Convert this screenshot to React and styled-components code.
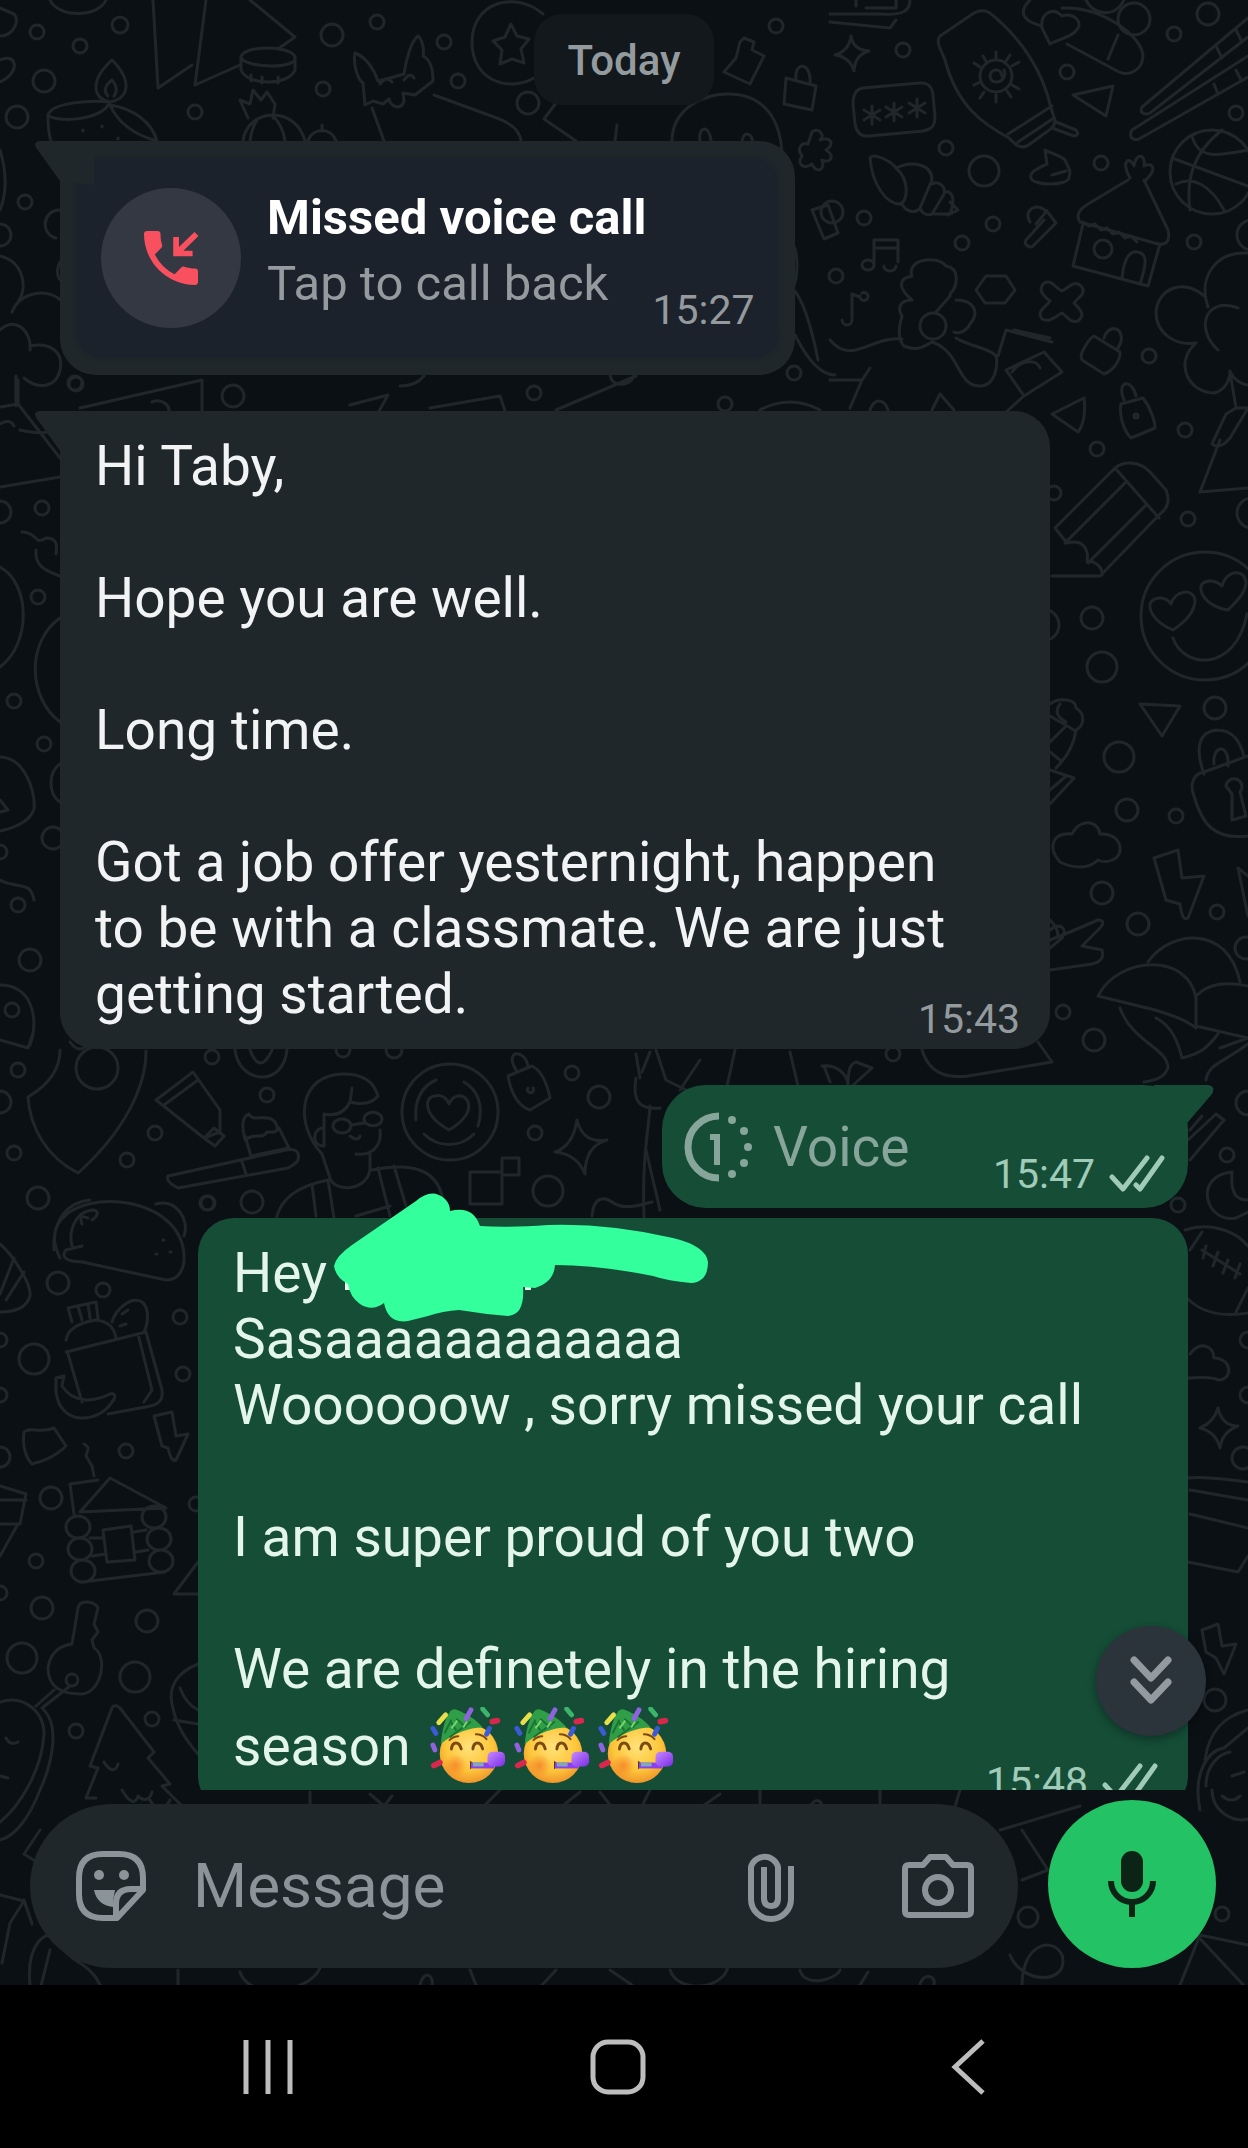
import { styled, createGlobalStyle } from "styled-components";

const missedCall = { title: "Missed voice call", hint: "Tap to call back", time: "15:27" };

const greeting = `Hi Taby,

Hope you are well.

Long time.

Got a job offer yesternight, happen
to be with a classmate. We are just
getting started.`;

const reply = `Sasaaaaaaaaaaaa
Woooooow , sorry missed your call

I am super proud of you two

We are definetely in the hiring`;

// wallpaper bubbles: x, y, radius
const dots = [
    [37, 32, 7], [120, 25, 8], [80, 46, 7], [44, 81, 11], [17, 117, 11], [195, 112, 7], [332, 35, 11],
    [377, 22, 7], [444, 42, 7], [458, 81, 7], [323, 89, 7], [528, 103, 11], [776, 26, 7], [25, 202, 7],
    [0, 235, 11], [75, 383, 7], [233, 396, 11], [534, 393, 7], [794, 373, 7], [725, 404, 7],
    [1134, 19, 16], [1208, 14, 11], [1174, 34, 7], [1067, 72, 7], [1236, 113, 7], [903, 50, 7],
    [946, 148, 7], [984, 171, 15], [1101, 163, 7], [864, 218, 7], [993, 224, 7], [962, 243, 7],
    [836, 276, 7], [1194, 242, 7], [1252, 235, 15], [1149, 356, 7], [1185, 430, 7], [1097, 449, 7],
    [1188, 519, 7], [1252, 513, 15], [1054, 493, 7], [1092, 618, 11], [1102, 667, 15], [1215, 708, 11],
    [1119, 757, 15], [1127, 810, 11], [1176, 816, 7], [1102, 893, 11], [1138, 924, 11], [1217, 912, 7],
    [1063, 1012, 7], [1094, 1040, 11], [893, 1054, 7], [1246, 948, 11], [1043, 625, 16], [832, 212, 11],
    [18, 1070, 7], [212, 1057, 7], [267, 1095, 7], [155, 1133, 7], [14, 1153, 7], [127, 1160, 7],
    [38, 1198, 11], [208, 1203, 7], [252, 1202, 11], [97, 1068, 21], [572, 1073, 7], [599, 1097, 11],
    [535, 1133, 7], [548, 1191, 15], [343, 1050, 7], [394, 1050, 8], [0, 1102, 11],
    [58, 1283, 11], [103, 1290, 7], [180, 1317, 7], [34, 1359, 15], [183, 1374, 7], [0, 1340, 7],
    [0, 1395, 7], [126, 1451, 7], [51, 1498, 11], [196, 1504, 7], [36, 1561, 7], [0, 1593, 7],
    [42, 1608, 11], [147, 1621, 11], [22, 1658, 15], [135, 1677, 15], [152, 1719, 7], [76, 1731, 7],
    [0, 1457, 10], [207, 1203, 7], [76, 384, 7], [42, 508, 7], [38, 597, 7], [14, 701, 7], [44, 744, 7],
    [53, 838, 11], [0, 852, 7], [0, 512, 11], [1227, 1155, 7], [1178, 1205, 7], [1248, 1103, 12],
    [1248, 1340, 8], [1248, 1395, 8], [1243, 1458, 11], [1215, 1700, 11], [1028, 1917, 10],
    [1222, 1914, 7], [18, 905, 7], [30, 960, 11], [12, 1010, 7],
];

const doodles = [
    // top left: cup, sheet of paper, drum, candle
    "M50 0C58 18 98 18 106 0M153 0l5 88 34-23M206 0l-11 85 45-20M250 0l45 37-17 12M0 36c14 0 20-16 14-22L0 8M0 60c16-8 22 12 0 22",
    "M241 57c2-12 50-12 54 0s-50 12-54 0v13c6 16 48 16 54 0V57M251 75v6M262 77v6M278 77v6",
    "M112 60C90 80 92 98 110 102C130 98 132 80 112 60M108 96c-8-8 4-16 4-16s8 8 2 16M110 102c-18-2-58 0-62 13 8 8 54 6 62-13zM48 115c0 10 0 18 3 26M110 105c8 18 25 30 47 36M110 105c25 4 42 18 47 36M83 130v1M102 126v1M118 138v1",
    // pineapple and its leaf
    "M248 118l-8-18 10 4 3-14 8 10 6-8 8 12-2 14M243 141c2-16 15-26 30-26s28 10 32 26M257 120q-6 10-7 21M273 116q10 10 12 25M308 141c4-14 24-14 28 0M322 131v-6",
    // fox
    "M355 53c-2 10 2 26 8 30l2 22 8-4 10 3 6-5c2 8 12 12 15 2l-1-8 12 2 18-14c0-14-4-22-10-25 2-8-2-18-5-20-7 5-12 24-14 38l-14 4-12 3c-4-12-12-24-23-28zM434 95l60 22c18 6 26 14 27 24M372 108l12 33M380 84c4-6 8-6 12-2M404 80c4-6 8-6 10-2",
    // coin with a star
    "M543 14C515-10 472 2 472 42s38 50 62 36M511 24l6 12 12 3-8 10 3 14-12-4-12 5 2-14-9-9 12-4z",
    "M744 38l10 4-2 8 12 6-14 28-26-12 12-14 4-16zM786 78l30 8-4 24-28-6zM796 80c-2-20 16-18 14 4M672 141c0-30 28-47 56-47s52 16 54 60M700 141c-2-16 10-16 11 0M742 143c0-12 10-12 11 0M556 103l-12 16 32 22M617 125l-2 16",
    "M812 132c6-6 14 4 8 8 10-4 16 4 6 10 10 6 4 14-4 10 4 10-6 14-10 4-8 6-16 0-10-8-6-8 0-14 6-12z",
    // left edge: tree and clouds
    "M0 150c6 20 8 40 0 60M60 210c-18 0-20 24-4 28M0 256c24 6 28 32 18 46M12 312c8-22 40-24 50-10M0 330c14-14 32 0 30 20M30 346c20-4 34 6 30 24s-22 20-36 8M16 376v30M60 262q-6 12 2 20",
    "M80 408l122-28v32M152 402c10-4 20 4 16 12M350 405l38-10-10 18M430 408l70-12 6 18M400 386q16 0 24-10M556 410l80-34M760 410q30-16 60 0M610 372q0 14 14 12 10-2 10-12",
    "M790 240c10 10 8 40 2 50M812 210l16-5 10 28-14 6zM794 290c12 14 20 50 24 70M795 335c10 20 24 40 40 40",
    // keyboard, spark, passcode
    "M830 14h50c24 2 30-4 30-14M830 22l60 6 6-8M856 0v6M866 8h30V0",
    "M851 36q2 14 18 15-14 4-15 20-4-14-19-16 14-4 16-19",
    "M863 88l56-5c10-1 13 4 14 12l2 22c0 10-5 13-12 14l-54 5c-10 1-13-6-14-12l-2-20c0-10 4-15 10-16z",
    "M872 106v18M864 110l16 10M880 110l-16 10M894 103v18M886 107l16 10M902 107l-16 10M917 99v18M909 103l16 10M925 103l-16 10",
    // sunscreen
    "M940 36l34-23c6-3 11-3 16 0 32 26 52 56 61 95l4 12c0 9-10 12-14 16l-14 10c-8 3-12-2-18-8-26-14-52-32-64-78l-6-14q-2-7 1-10zM1008 134l44-28M1018 142l36-24M1056 122l20 8q4 5-2 6l-22-8",
    "M980 76a16 16 0 1 0 32 0 16 16 0 1 0-32 0M1002 76a6 6 0 1 0-6 6c8 0 10-8 8-12M996 52v6M996 95v7M974 63l6 4M1012 85l7 4M974 85l6-3M1012 66l7-4M983 56l3 5M1007 91l4 6M1010 55l-4 6M984 92l-4 6",
    "M1030 0c-14 14-4 22 12 26M1050 44l-8-16c-2-14 10-22 20-12 12-4 20 6 16 12-4 8-16 10-28 16zM1062 8c40-2 80 28 81 48-1 16-16 20-24 16l-52-28M1118 35l-10 24M1086 0c8 16 30 18 38 0",
    "M1073 95l40-9-7 30zM1248 18L1142 107c-3 7 4 8 8 6l98-76M1216 46l6 12M1236 30l6 12M1248 56l-116 74c-4 7 1 11 7 9l109-62M1214 84l4 10M1236 70l5 10",
    // basketball
    "M1170 172a42 42 0 1 0 84 0 42 42 0 1 0-84 0M1172 158l76 28M1222 130c-30 24-36 50-32 80M1192 136c6 24 26 20 56 14M1176 184c16-8 34 0 48 26",
    // shell
    "M870 158c4-6 22 4 26 10 14 12 12 34 4 36-14 0-28-20-30-46zM896 168c16-8 36-4 36 12l-12 28c-4 6-14 4-18-4M932 184c8-4 14 4 12 10l-12 20c-4 2-10 0-12-6M944 192c8-2 12 6 6 22h-16M950 202l8 8-10 5",
    "M1045 150l2 14c-10 5-18 8-16 14 2 8 36 8 38 0 3-8-2-12-4-18-4-4-12-6-20-10zM1052 175l14-4",
    "M1030 222c-8-14 10-20 16-10l-10 12M1046 210l10 13-24 24c-6 0-8-4-6-7l18-20",
    // hut
    "M1128 180l-40 24c-10 6-12 12-8 18l78 22c10 2 12-6 10-14l-24-50M1130 178c-10-18 0-22 4-12 2-14 12-12 10 0 8-4 14 2 2 14M1083 224l-10 42 75 20 12-42M1094 249a9 9 0 1 0 18 0 9 9 0 1 0-18 0M1122 278c2-20 8-28 16-26s10 8 2 32M1083 222l6 4 6-2 6 6 6-2 6 6 6-2 6 6 6-2 6 6",
    // notes
    "M874 264v-24h24v22M874 248h24M862 265a6 5 0 1 0 12 0 6 5 0 1 0-12 0M884 266a6 5 0 1 0 12 0M852 318v-24l8 3M842 320a5 5 0 1 0 10 0M860 296a4 4 0 1 0 2-3",
    // flower on a ribbon
    "M912 300c-16-14-12-22 0-24-6-16 24-22 34-10 14 2 12 20 4 28M956 300c18 0 24 12 14 24-4 8-12 10-16 8M920 326a13 13 0 1 0 26 0 13 13 0 1 0-26 0M912 300c-14 0-14 10-10 16-4 14-4 24 2 30 14 6 20 0 28-4M936 312l14-16M830 340c22 26 40-4 72-1M932 342c30 10 24 46 50 44 14-2 16-22 14-30-6-8-28-10-40-18M998 356l8-26 46 12M1014 330l36 8",
    "M986 276h20l9 14-10 13h-20l-9-13zM1006 370l38-18 18 20-38 24zM1024 396l-18 16M1012 372c10-14 26-12 28-4M1044 283c8-4 10 4 18 8 8-4 12-12 20-4 4 8-4 10-8 16 6 6 12 12 4 18-8 2-10-4-16-8-8 4-12 10-20 6-6-8 4-12 8-18-8-6-12-12-6-18z",
    "M1094 336l26 16c0 12-10 20-16 22l-22-14c-4-6 8-22 12-24zM1104 338c4-14 20-12 17 4l-4 8M1052 414l32-16c2 12 0 26-6 34zM1121 404l22-6c8 10 12 24 12 30l-24 10c-8-8-12-24-10-34zM1124 400c-8-20 8-22 12-4M1134 416a2 2 0 1 0 4 0 2 2 0 1 0-4 0",
    "M1248 253c-34-2-50 26-40 54M1204 296c-20-18-46-8-48 16 0 22 20 34 40 31M1238 308c-32-12-44 20-20 42M1194 345c-20 20-4 48 20 48 10-2 16-12 16-22 4 10 14 14 18 14M1230 372l6 36-10 6-14 30q8 6 18-6l18-30M1236 408h12M1220 440l-20 52 48-4",
    "M830 380h32l8-12M862 380l-12 28M870 410c4-12 14-12 18 0M932 410l8-16 14 16",
    // pencil
    "M1055 528l60-60c10-8 26-6 35 4l16 18c4 10 2 18-6 24l-60 62h-48M1115 468l44 50M1125 483l-60 60M1146 505l-58 58M1055 528l12 15c16-4 22 6 20 18 8 0 16 6 15 14",
    // smiley with heart eyes
    "M1141 616a64 64 0 1 0 128 0 64 64 0 1 0-128 0M1173 630c-20-8-28-24-20-30 6-4 14-2 18 4 4-14 22-16 24-4 0 12-10 22-22 30zM1228 610c-24-4-30-20-26-26 6-6 16-2 20 2 4-16 22-18 24-4 0 10-8 18-18 28zM1173 638c10 30 62 36 74-24",
    "M1140 704l40 2-18 30z",
    // grapes, padlock, cloud, bolt
    "M1050 704c8-6 26-6 26 4 10 6 8 18 0 22-2 16-12 30-20 38M1050 716l24 14M1050 742l16-16M1050 752l10 8M1060 704q-8 10 6 18M1050 770l24 8-24 26M1050 790l16-14",
    "M1204 774c-10-28-4-42 12-44 18 0 24 12 28 26M1214 764c-2-16 12-22 14-4v6M1248 756l-44 16c-12 2-14 14-10 24 8 28 20 44 54 40M1226 786a8 8 0 1 1 14 6l6 24-14 4v-26z",
    "M1060 862c-14-16-6-30 12-28 8-16 26-14 28 0 22-2 26 22 12 26-4 2-10 2-14 0-10 10-26 8-38 2z",
    "M1154 858l24-8 4 28 22-2-16 42c-4 2-6 0-8-14l-14-4zM1238 868l10 48M1238 868l10 8M1050 930c10-8 18-2 12 8l-12 10M1050 920q8 8 8 16M1050 940l20-8 28-12c6 0 6 4 2 8l-18 18 20 4c2 6 0 12-10 14l-42 6",
    // umbrellas
    "M1098 996c20-40 90-44 98 2v30c-20-16-60-22-98-32zM1148 962c22-32 80-38 92 20M1196 996c14-14 32-14 52-10M1196 1026l52 12M1120 1008c12 34 48 40 48 60-4 10-12 12-24 14M1156 1018c16 8 22 24 26 40 16-4 24-8 36-24M1206 1080c2-16 18-18 42-36M1220 1048l28-10",
    "M922 1050c8 26 28 28 46 26l84-14-14-20M822 1066c14-2 26 8 26 20M848 1086c0-16 2-22 8-24l16 6-20 18M824 1066l6 16M650 1052l-8 20M700 1060l-20 30M735 1050l-8 36M790 1052l8 34M656 1050l10 30 28 14",
    // guitar pick, tube, toothbrush
    "M60 1050c0 22-15 37-32 47 2 30 18 60 50 76 45-40 68-85 68-122M193 1072l-37 28 48 38 16-6v-22zM198 1080l-34 25M204 1138l10-10 10 8-9 10zM0 1040l28 8 4-12M70 1042q10 14 20 0",
    "M245 1140c-4-16-2-24 4-26 4 10 22-4 28 12 2 8-6 6-10 6-4 8-12 0-22 8zM245 1136l6 20 38-8-10-20M168 1176l118-26c10-2 14 2 12 10-2 4-6 6-10 8l-110 20c-8-4-12-8-10-12zM242 1162l4 12",
    "M235 1050c4 34 48 38 52 0M250 1050q10 26 22 0",
    // friend with glasses
    "M322 1154c-28-30-24-80 22-80 20 0 30 8 34 22-8 10-20 8-28 6-6 12-16 14-26 12M350 1102l2-14M324 1114l0 32c-12 0-12-16-2-18M333 1126a9 7 0 1 0 18 0 9 7 0 1 0-18 0M364 1119a8 6 0 1 0 18 0 8 6 0 1 0-18 0M351 1125l13-2M380 1130c2 16-8 26-24 24M350 1136q8 6 10 0M322 1154l8 24c4 14 36 14 40-8v-16M276 1220c4-22 22-34 52-40M372 1170c40-8 68-2 72 36M312 1184l4 32M328 1180l6 38M378 1168l12 48M394 1166l12 40M356 1216l34-10",
    "M402 1112a48 48 0 1 0 96 0 48 48 0 1 0-96 0M449 1130c-28-16-24-34-14-34 6-2 12 2 14 8 4-10 14-10 18-4 6 10-4 22-18 30zM416 1120c-2-20 6-34 20-40M464 1082c14 8 20 24 14 44M424 1134c14 14 36 14 50 0",
    "M508 1076l24-10c12 6 16 22 18 32l-20 12c-14-4-20-22-22-34zM516 1070c-12-20 8-22 12-4M528 1088a3 3 0 1 0 5 0M470 1172h32v32h-32zM502 1158h17v17h-17zM577 1120q6 24 30 20-22 6-22 34-8-20-30-22 18-6 22-32",
    "M636 1054l4 24M636 1078c-4 24 4 32 24 30M650 1106c-2 30-8 50-6 112M646 1150l14 60M592 1216c2-22 14-18 20-14 10 8 26 4 40 0",
    // pizza, taco
    "M0 1244c12 10 32 40 30 52-4 14-18 16-30 16M0 1294l14-36M6 1300l18-28M60 1258c-20-40 20-60 60-56 36 4 66 24 64 60-2 12-8 18-18 18L82 1262M54 1250c-2-30 14-48 36-50M72 1246c-4-16 4-34 20-36 8 0 6 6 0 10M82 1224q-4-10 6-6M84 1262c-16 0-24-4-18-12l16-4M156 1204c20-6 34 16 28 32M163 1240h1M156 1254h1M170 1252h1",
    // grocery bag
    "M66 1340c2-14 18-18 30-20 14 2 18 8 20 18M72 1322l-4-14 28-6 2 16M78 1306l4 14M88 1304l2 14M112 1322c4-14 20-26 30-20 8 6 6 22 2 30M66 1352l80-20 16 58c2 14-8 16-22 18l-32 6M68 1354l14 48M138 1334l14 56-8 12M56 1378l8-2-2 10c12 18 32 16 48 8 6-2 6 4 2 8-14 22-52 24-56-10zM122 1314l6-4M120 1326l6-2",
    "M24 1432c6-6 16 2 30-4l12 18c-10 10-24 16-34 18-6-6-10-18-8-32zM84 1444c8 4 2 8 2 12l6 10 2 10M154 1416l18-4 4 24 12-2-12 26c-4 2-6-4-8-12l-6-2z",
    // log cabin
    "M74 1514l-4-30 28-4M80 1512l30-34 56 30zM66 1527a12 11 0 1 0 24 0 12 11 0 1 0-24 0M68 1549a12 11 0 1 0 24 0 12 11 0 1 0-24 0M71 1571a12 11 0 1 0 24 0 12 11 0 1 0-24 0M142 1517a12 11 0 1 0 24 0 12 11 0 1 0-24 0M147 1539a12 11 0 1 0 24 0 12 11 0 1 0-24 0M149 1561a12 11 0 1 0 24 0 12 11 0 1 0-24 0M90 1581l75-9M103 1530l28-4 4 34-28 2zM90 1538h14M92 1556l14-2M134 1532l12-2M136 1552l12-2",
    "M0 1486l26 8-6 30H0M0 1500h26M0 1556l18-32M198 1562l-24 32h24",
    // key on a ring
    "M78 1608c2-10 18-6 20 0l-4 16 4 8-6 8 2 8c14 8 8 44-12 46-20 0-34-6-34-26 2-14 10-22 24-24zM66 1680a6 6 0 1 0 12 0 6 6 0 1 0-12 0M70 1686l-28 22M54 1690l-18 16M0 1702c24-8 44 10 44 32-2 36-24 72-44 88M44 1710c16 16 8 54-4 80-10 26-24 46-40 50M6 1738q4 8 12 4M0 1776l8 2",
    // fir tree
    "M90 1766l22-58c2-4 6-2 8 0l34 44-6 6 22 26-8 2 22 22M90 1766l8 2-12 30h10M104 1762c6 10 12 10 14 2M122 1790c8 14 14 14 16 6 6 6 12 4 14-4",
    "M198 1664c-20 8-30 22-26 40 4 22 14 36 26 50M174 1720l24 4M180 1688q6 16 18 22",
    "M150 1800q10 20 20 0M310 1792v18M370 1794l14 12 8-10M500 1790l-20 20M560 1808l20-16M600 1792l14 18M650 1790l-10 20M720 1794l-20 14M760 1790v18M810 1808c4-12 14-8 12 2M880 1790v14M960 1790l-6 20",
    "M24 1900l8 24M0 1895l24 6-14 22-8 40M40 1830l-16 24 16 10M30 1985c-4-40 16-60 30-44 4 20 30 20 40 44M50 1950l-10 40M178 1970v15M240 1972c10 30 70 20 80-4M420 1985c4-16 14-10 12 0M470 1970l6 15M556 1970l-14 15M610 1970l22 15M670 1970c8 24 54 20 58-4M800 1970c4 18 36 10 40 0M868 1972l-8 13M920 1984c4-12 16-8 14 0",
    "M1000 1830l80-24M1022 1830l26 40-26 10M1192 1930l56 60M1180 1985l20-50 48 10M1010 1955c12 30 60 30 52 0-10-20-40-10-40 30",
    // right edge: pens, moon, football
    "M1188 1140l28-26 8 6-34 40M1190 1130l12-14M1232 1172c-40 4-26 52 4 46l12-6M1232 1172c-2 24 6 28 16 28M1185 1230c24-8 50 0 63 16M1188 1299c14 14 36 18 60 14M1202 1232l-12 18M1248 1288l-12 24M1202 1250l38 24M1206 1246l-3 12M1218 1252l-5 14M1228 1260l-5 13M1240 1264l-5 14",
    "M1190 1354c10-14 24-8 24 4 18 0 20 22 4 22-6-4-22-2-30-2M1218 1408q4 18 20 18-16 6-18 22-4-16-20-20 14-6 18-20M1188 1478c20-2 40 2 60 4M1190 1490l58 10M1190 1514l58 14M1188 1562l50 10 10-16",
    "M1202 1630l16-6 4 22 14-2-12 30-8-16-10-6zM1205 1760c4-30 20-44 43-50M1200 1810c-8-40 10-60 24-62l24-20M1206 1786c0-22 14-32 24-34M1212 1790a30 30 0 0 0 40 28M1232 1776l12-4M1222 1796q10 8 18 0",
    // left edge beside the first message
    "M18 380v24L60 458M0 407l18-3M0 424q10-6 14 2M20 430q18 4 28 2M0 487l60-10M22 532c16 0 12 14 24 6 14 0 10 12 10 16M36 550c-2 18 14 22 24 26M0 567c30 16 32 76 0 100M60 618c-34 24-32 80 0 104M0 757c24 0 36 34 34 52-4 14-24 20-34 22M0 800l8 10-8 2M60 764c-12 8-12 30 0 38M0 880c20 10 30 0 34 20M0 985c30 0 40 30 30 60",
];

function Wallpaper() {
    return (
        <WallpaperArt viewBox="0 0 1248 1985" preserveAspectRatio="xMidYMid slice" aria-hidden="true">
            {dots.map(([x, y, r], i) => (
                <circle key={i} cx={x} cy={y} r={r} />
            ))}
            {doodles.map((d, i) => (
                <path key={i} d={d} />
            ))}
        </WallpaperArt>
    );
}

function Ticks() {
    return (
        <svg width="56" height="38" viewBox="0 0 56 38" fill="none" stroke="currentColor" strokeWidth="5" aria-label="Delivered">
            <path d="M3 22l11 12L38 3M27 30l4 4L53 3" strokeLinecap="round" strokeLinejoin="round" />
        </svg>
    );
}

function PartyFace() {
    return (
        <Emoji viewBox="0 0 80 80" role="img" aria-label="partying face">
            <defs>
                <radialGradient id="skin" cx="50%" cy="38%" r="62%">
                    <stop offset="0" stopColor="#ffe27a" />
                    <stop offset="0.65" stopColor="#fdc63a" />
                    <stop offset="1" stopColor="#f0952a" />
                </radialGradient>
                <radialGradient id="blush">
                    <stop offset="0" stopColor="#f47a26" stopOpacity="0.75" />
                    <stop offset="1" stopColor="#f47a26" stopOpacity="0" />
                </radialGradient>
                <linearGradient id="blower" x1="0" x2="1" y1="0" y2="1">
                    <stop offset="0" stopColor="#c78bff" />
                    <stop offset="1" stopColor="#7a2ce6" />
                </linearGradient>
            </defs>
            <circle cx="40" cy="48" r="30" fill="url(#skin)" />
            <circle cx="26" cy="60" r="12" fill="url(#blush)" />
            <path d="M11 38C12 26 15 12 21 4q3-3 7-1c8 3 20 10 26 18-14 0-30 6-43 17z" fill="#2f9e46" />
            <path d="M15 27l7-14M20 31l22-16M27 24l-6-9M37 21L27 12" stroke="#197435" strokeWidth="2" />
            <path d="M22 22l6-8M34 21l4-6" stroke="#7bd46a" strokeWidth="2" />
            <path d="M9 16l7-8" stroke="#e8e04a" strokeWidth="5" strokeLinecap="round" />
            <path d="M37 12l5-9" stroke="#8f63e0" strokeWidth="5" strokeLinecap="round" />
            <path d="M54 2l5 6" stroke="#3cb56a" strokeWidth="5" strokeLinecap="round" />
            <path d="M3 22l3 5M61 22l-3 6" stroke="#3b5bd6" strokeWidth="5" strokeLinecap="round" />
            <path d="M64 15l5-1M4 60l6-3" stroke="#d8284d" strokeWidth="6" strokeLinecap="round" />
            <path d="M3 39l2 5" stroke="#8f63e0" strokeWidth="5" strokeLinecap="round" />
            <g fill="none" stroke="#7a4a12" strokeLinecap="round">
                <path d="M22 43c1-8 8-8 10 0M44 43c1-8 8-8 10 0" strokeWidth="3" />
                <path d="M20 34q4-4 9-4M47 28q7 0 11 5" strokeWidth="2" />
            </g>
            <path d="M41 55l5 4-5 5z" fill="#5c3a12" />
            <path d="M42 60h24" stroke="#8b3ff0" strokeWidth="6" />
            <path d="M44 59h11" stroke="#7fa9b5" strokeWidth="4" />
            <rect x="59" y="46" width="18" height="15" rx="5" fill="url(#blower)" />
        </Emoji>
    );
}

function Tail({ out }) {
    return (
        <TailArt $out={out} viewBox="0 0 60 44" aria-hidden="true">
            <path d={out ? "M0 0H54Q62 1 58 9L34 37L0 44z" : "M60 0H6Q-2 1 3 8L26 40L60 44z"} />
        </TailArt>
    );
}

function App() {
    return (
        <Screen>
            <GlobalStyle />
            <Chat>
                <Wallpaper />
                <Thread>
                    <DayChip>Today</DayChip>

                    <CallBubble>
                        <Tail />
                        <CallCard type="button">
                            <CallIcon>
                                <svg width="72" height="72" viewBox="0 0 24 24" fill="#f9505f">
                                    <path d="M20 15.5c-1.2 0-2.4-.2-3.6-.6-.4-.1-.8 0-1 .3l-2.2 2.2a15 15 0 0 1-6.6-6.6l2.2-2.2c.3-.3.4-.7.2-1A11.4 11.4 0 0 1 8.500 4c0-.6-.4-1-1-1H4c-.6 0-1 .4-1 1a17 17 0 0 0 17 17c.6 0 1-.4 1-1v-3.500c0-.6-.4-1-1-1z" />
                                    <path d="M20.500 4L14 10.300M13.700 5v5.500h5.500" fill="none" stroke="#f9505f" strokeWidth="1.900" />
                                </svg>
                            </CallIcon>
                            <CallText>
                                <CallTitle>{missedCall.title}</CallTitle>
                                <CallHint>{missedCall.hint}</CallHint>
                            </CallText>
                            <Meta>{missedCall.time}</Meta>
                        </CallCard>
                    </CallBubble>

                    <Bubble>
                        <Tail />
                        <Body>{greeting}</Body>
                        <Meta>15:43</Meta>
                    </Bubble>

                    <VoiceBubble>
                        <Tail out />
                        <svg width="72" height="72" viewBox="0 0 72 72" fill="none" stroke="currentColor" aria-hidden="true">
                            <path d="M38 5a31 31 0 0 0 0 62" strokeWidth="7" />
                            <path d="M29 26h7v28" strokeWidth="6" />
                            <g fill="currentColor" stroke="none">
                                <circle cx="51" cy="9" r="4" />
                                <circle cx="63" cy="20" r="4" />
                                <circle cx="67" cy="36" r="4" />
                                <circle cx="63" cy="52" r="4" />
                                <circle cx="51" cy="63" r="4" />
                            </g>
                        </svg>
                        <VoiceLabel>Voice</VoiceLabel>
                        <Meta $out>
                            15:47 <Ticks />
                        </Meta>
                    </VoiceBubble>

                    <Bubble $out>
                        <Body>
                            {"Hey\n"}
                            {reply}
                            <EmojiLine>
                                season <PartyFace />
                                <PartyFace />
                                <PartyFace />
                            </EmojiLine>
                        </Body>
                        <Meta $out>
                            15:48 <Ticks />
                        </Meta>
                        <Scribble viewBox="0 0 400 130" aria-hidden="true">
                            <path d="M17 89h8v9h-8zM197 92h6v6h-6z" fill="#e4f6ec" />
                            <path
                                fill="#33ff9c"
                                d="M6 74Q8 64 24 53L88 9Q104-5 117 7Q122 12 122 19Q145 13 152 34Q180 36 220 33Q280 31 345 46Q378 54 380 70Q380 90 363 91Q340 89 325 84Q270 73 227 73Q226 90 207 96L195 95Q197 123 180 124Q155 122 131 118Q115 119 100 124L80 129Q60 132 56 111Q44 120 32 112Q22 105 20 92Q8 86 6 74z"
                            />
                        </Scribble>
                    </Bubble>
                </Thread>
                <JumpButton type="button" aria-label="Jump to latest">
                    <svg width="44" height="50" viewBox="0 0 44 50" fill="none" stroke="#939ba1" strokeWidth="7" strokeLinecap="round" strokeLinejoin="round">
                        <path d="M5 4l17 18L39 4M5 26l17 18 17-18" />
                    </svg>
                </JumpButton>
                <Composer>
                    <Field>
                        <IconButton type="button" aria-label="Stickers">
                            <svg width="72" height="72" viewBox="0 0 72 72" fill="none" stroke="currentColor" strokeWidth="6" strokeLinejoin="round">
                                <path d="M28 4h16q24 0 24 24v12L42 68H28Q4 68 4 44V28Q4 4 28 4z" />
                                <path d="M67 39H56q-15 0-15 15v13" />
                                <path d="M19 40h21q-2 8-2 17Q22 55 19 40z" fill="currentColor" stroke="none" />
                                <circle cx="24" cy="25" r="5" fill="currentColor" stroke="none" />
                                <circle cx="49" cy="25" r="5" fill="currentColor" stroke="none" />
                            </svg>
                        </IconButton>
                        <MessageInput type="text" placeholder="Message" aria-label="Message" />
                        <IconButton type="button" aria-label="Attach">
                            <svg width="46" height="72" viewBox="0 0 46 72" fill="none" stroke="currentColor" strokeWidth="6">
                                <path d="M43 16v33a20 20 0 0 1-40 0V17a14 14 0 0 1 27 0v31q0 8-7 8t-7-8V17" />
                            </svg>
                        </IconButton>
                        <IconButton type="button" aria-label="Camera">
                            <svg width="72" height="72" viewBox="0 0 72 72" fill="none" stroke="currentColor" strokeWidth="6">
                                <path d="M7 15h14l7-8h16l7 8h14q4 0 4 4v42q0 4-4 4H7q-4 0-4-4V19q0-4 4-4z" strokeLinejoin="round" />
                                <circle cx="36" cy="40" r="13" />
                            </svg>
                        </IconButton>
                    </Field>
                    <MicButton type="button" aria-label="Record voice message">
                        <svg width="50" height="68" viewBox="0 0 50 68">
                            <rect x="14" y="1" width="22" height="41" rx="11" fill="#0b2416" />
                            <path d="M4 31a21 21 0 0 0 42 0M25 52v15" fill="none" stroke="#0b2416" strokeWidth="6" />
                        </svg>
                    </MicButton>
                </Composer>
            </Chat>
            <NavBar aria-label="System">
                <NavButton type="button" aria-label="Recent apps">
                    <svg width="56" height="56" viewBox="0 0 56 56">
                        <path d="M6 1v54M28 1v54M50 1v54" />
                    </svg>
                </NavButton>
                <NavButton type="button" aria-label="Home">
                    <svg width="56" height="56" viewBox="0 0 56 56">
                        <rect x="3" y="3" width="50" height="50" rx="15" />
                    </svg>
                </NavButton>
                <NavButton type="button" aria-label="Back">
                    <svg width="56" height="56" viewBox="0 0 56 56">
                        <path d="M43 2L15 28l28 26" />
                    </svg>
                </NavButton>
            </NavBar>
        </Screen>
    );
}

const GlobalStyle = createGlobalStyle`
    * {
        box-sizing: border-box;
    }
    body {
        margin: 0;
        background: #000;
        font-family: Roboto, "Noto Sans", sans-serif;
    }
    button {
        font: inherit;
        color: inherit;
        border: none;
        padding: 0;
        background: none;
        cursor: pointer;
    }
    svg {
        display: block;
        flex: none;
    }
`;

const Screen = styled.main`
    height: 100vh;
    display: flex;
    flex-direction: column;
    overflow: hidden;
`;

const Chat = styled.section`
    position: relative;
    flex: 1;
    min-height: 0;
    display: flex;
    flex-direction: column;
    background: #0b1014;
`;

const WallpaperArt = styled.svg`
    position: absolute;
    inset: 0;
    width: 100%;
    height: 100%;
    fill: none;
    stroke: #20272b;
    stroke-width: 3;
    stroke-linecap: round;
    stroke-linejoin: round;
`;

const Thread = styled.div`
    position: relative;
    flex: 1;
    min-height: 0;
    overflow: hidden;
    display: flex;
    flex-direction: column;
    align-items: flex-start;
    gap: 36px;
    padding: 14px 60px 0;
`;

const DayChip = styled.div`
    align-self: center;
    padding: 20px 33px 17px;
    border-radius: 28px;
    background: #12181b;
    color: #949b9f;
    font-size: 42px;
    line-height: 54px;
    font-weight: 500;
`;

const Bubble = styled.article`
    position: relative;
    flex: none;
    display: grid;
    width: 100%;
    max-width: 990px;
    padding: 22px 30px 10px 35px;
    border-radius: 36px;
    background: ${(props) => (props.$out ? "#154d37" : "#1f272a")};
    color: ${(props) => (props.$out ? "#e4f6ec" : "#f1f3f4")};
    ${(props) => props.$out && "align-self: flex-end; margin-top: -26px;"}
`;

const CallBubble = styled(Bubble)`
    width: auto;
    padding: 17px;
`;

const VoiceBubble = styled(Bubble)`
    display: flex;
    align-items: center;
    align-self: flex-end;
    gap: 20px;
    padding: 14px 23px 14px 19px;
    border-radius: 44px;
    background: #154d37;
    color: #87a59a;
    width: auto;
    min-width: 526px;
    height: 123px;
`;

const TailArt = styled.svg`
    position: absolute;
    top: 0;
    ${(props) => (props.$out ? "right: -26px;" : "left: -26px;")}
    width: 60px;
    height: 44px;
    fill: ${(props) => (props.$out ? "#154d37" : "#1f272a")};
`;

// body and timestamp share one grid cell, so the time tucks in beside the last line
const Body = styled.div`
    grid-area: 1 / 1;
    padding-bottom: 12px;
    white-space: pre-line;
    font-size: 55px;
    line-height: 66px;
`;

const EmojiLine = styled.div`
    display: flex;
    align-items: center;
    gap: 6px;
    height: 88px;
    white-space: pre;
`;

const Emoji = styled.svg`
    width: 78px;
    height: 78px;
`;

const Meta = styled.span`
    grid-area: 1 / 1;
    display: flex;
    align-items: center;
    gap: 14px;
    align-self: end;
    justify-self: end;
    margin-left: auto;
    font-size: 41px;
    line-height: 40px;
    color: ${(props) => (props.$out ? "#a0cbb8" : "#949a9e")};
`;

const VoiceLabel = styled.span`
    font-size: 55px;
    line-height: 66px;
`;

const CallCard = styled.button`
    display: flex;
    align-items: center;
    gap: 6px;
    height: 200px;
    padding: 28px 24px;
    border-radius: 26px;
    background: #1c222b;
    text-align: left;
    box-shadow: 0 0 4px #1c222b;
`;

const CallIcon = styled.span`
    display: grid;
    place-items: center;
    width: 140px;
    height: 140px;
    margin-right: 20px;
    border-radius: 50%;
    background: #333842;
`;

const CallText = styled.span`
    display: flex;
    flex-direction: column;
    padding-bottom: 14px;
    line-height: 66px;
`;

const CallTitle = styled.strong`
    font-size: 49px;
    color: #fff;
`;

const CallHint = styled.span`
    font-size: 49px;
    color: #949a9e;
`;

const Scribble = styled.svg`
    position: absolute;
    left: 130px;
    top: -26px;
    width: 400px;
    height: 130px;
    overflow: visible;
`;

const JumpButton = styled.button`
    position: absolute;
    right: 42px;
    bottom: 249px;
    display: grid;
    place-items: center;
    width: 110px;
    height: 110px;
    border-radius: 50%;
    background: #2b333b;
    box-shadow: 0 3px 8px rgba(0, 0, 0, 0.35);
`;

const Composer = styled.form`
    position: relative;
    display: flex;
    align-items: flex-end;
    gap: 30px;
    padding: 10px 32px 17px 30px;
`;

const Field = styled.div`
    flex: 1;
    min-width: 0;
    height: 164px;
    display: flex;
    align-items: center;
    padding: 0 44px 0 45px;
    border-radius: 82px;
    background: #1f272a;
`;

const IconButton = styled.button`
    color: #8b9599;

    & + & {
        margin-left: 108px;
    }
`;

const MessageInput = styled.input`
    flex: 1;
    min-width: 0;
    margin: 0 24px 0 46px;
    padding: 0;
    border: none;
    outline: none;
    background: none;
    color: #f1f3f4;
    font: 62px / 72px Roboto, "Noto Sans", sans-serif;

    &::placeholder {
        color: #8b9599;
        opacity: 1;
    }
`;

const MicButton = styled.button`
    display: grid;
    place-items: center;
    width: 168px;
    height: 168px;
    border-radius: 50%;
    background: #22c265;
`;

const NavBar = styled.nav`
    display: flex;
    justify-content: center;
    gap: 294px;
    height: 163px;
    padding-right: 12px;
    background: #000;
`;

const NavButton = styled.button`
    svg {
        fill: none;
        stroke: #bdbdbd;
        stroke-width: 5;
    }
`;

export default App;
